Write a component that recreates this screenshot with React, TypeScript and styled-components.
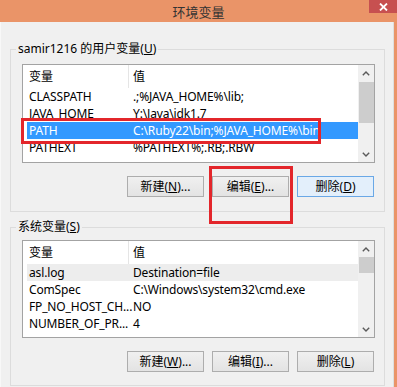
import React from 'react';
import styled, { createGlobalStyle } from 'styled-components';

const GlobalStyle = createGlobalStyle`
  html, body { margin: 0; padding: 0; background: #f0f0f0; }
  body {
    font-family: 'Noto Sans', 'Noto Sans CJK SC', sans-serif;
    font-size: 12px;
    color: #000;
  }
  * { box-sizing: border-box; }
`;

const Window = styled.div`
  position: relative;
  width: 397px;
  height: 387px;
  overflow: hidden;
  background: #ea9468;
  display: flex;
  flex-direction: column;
`;

const TitleBar = styled.div`
  position: relative;
  height: 22px;
  flex: none;
  display: flex;
  align-items: center;
  justify-content: center;
  font-family: 'Noto Sans CJK SC', sans-serif;
  font-size: 13px;
  color: #333;
`;

const CloseButton = styled.div`
  position: absolute;
  top: 0;
  right: 0;
  width: 28px;
  height: 13px;
  background: #c75050;
  display: flex;
  align-items: center;
  justify-content: center;
`;

const Client = styled.div`
  flex: 1;
  width: 394px;
  background: #f0f0f0;
  border-right: 1px solid #dedede;
  border-left: 1px solid #f8f8f8;
  padding: 27px 0 0 9px;
  display: flex;
  flex-direction: column;
`;

const GroupBox = styled.div<{ $h: number; $top: number; $padTop: number }>`
  position: relative;
  width: 375px;
  height: ${(p) => p.$h}px;
  margin-top: ${(p) => p.$top}px;
  border: 1px solid #dcdcdc;
  padding: ${(p) => p.$padTop}px 9px 0 11px;
  display: flex;
  flex-direction: column;
`;

const Legend = styled.span`
  position: absolute;
  top: -8px;
  left: 5px;
  padding: 0 2px;
  line-height: 14px;
  background: #f0f0f0;
  white-space: nowrap;
`;

const ListView = styled.div<{ $h: number }>`
  height: ${(p) => p.$h}px;
  flex: none;
  border: 1px solid #a3a3a3;
  background: #fff;
  display: flex;
`;

const ListBody = styled.div`
  flex: 1;
  overflow: hidden;
`;

const Header = styled.div`
  display: grid;
  grid-template-columns: 106px 1fr;
  height: 23px;
  line-height: 23px;
`;

const HeaderCell = styled.div<{ $first?: boolean }>`
  padding-left: ${(p) => (p.$first ? 6 : 4)}px;
  border-right: ${(p) => (p.$first ? '1px solid #e5e5e5' : 'none')};
  white-space: nowrap;
`;

const Row = styled.div<{ $state?: 'selected' | 'hover' }>`
  display: grid;
  grid-template-columns: 104px 1fr;
  height: 17px;
  line-height: 17px;
  margin-left: 4px;
  background: ${(p) =>
    p.$state === 'selected' ? '#3399ff' : p.$state === 'hover' ? '#ededed' : 'transparent'};
  color: ${(p) => (p.$state === 'selected' ? '#fff' : '#000')};
`;

const Cell = styled.div`
  padding-left: 2px;
  white-space: nowrap;
  letter-spacing: -0.15px;
`;

const ScrollBar = styled.div`
  width: 16px;
  flex: none;
  background: #f0f0f0;
  display: flex;
  flex-direction: column;
`;

const ArrowBox = styled.div`
  height: 16px;
  flex: none;
  display: flex;
  align-items: center;
  justify-content: center;
`;

const Thumb = styled.div<{ $gap: number; $h: number }>`
  margin-top: ${(p) => p.$gap}px;
  height: ${(p) => p.$h}px;
  margin-left: 1px;
  background: #cdcdcd;
  flex: none;
`;

const Track = styled.div`
  flex: 1;
`;

const ButtonRow = styled.div`
  display: flex;
  justify-content: flex-end;
  gap: 8px;
  margin-top: 13px;
  padding-right: 1px;
`;

const Button = styled.div<{ $default?: boolean }>`
  width: 77px;
  height: 21px;
  line-height: 19px;
  text-align: center;
  border: 1px solid ${(p) => (p.$default ? '#6aa8e6' : '#adadad')};
  background: ${(p) => (p.$default ? '#e3effb' : 'linear-gradient(#f0f0f0, #e3e3e3)')};
  white-space: nowrap;
`;

const Mark = styled.div<{ $x: number; $y: number; $w: number; $h: number }>`
  position: absolute;
  left: ${(p) => p.$x}px;
  top: ${(p) => p.$y}px;
  width: ${(p) => p.$w}px;
  height: ${(p) => p.$h}px;
  border: 3px solid #e3262b;
  pointer-events: none;
`;

const Chevron = ({ down }: { down?: boolean }) => (
  <svg width="8" height="5" viewBox="0 0 8 5">
    <path
      d={down ? 'M0.8 0.8 L4 4 L7.2 0.8' : 'M0.8 4.2 L4 1 L7.2 4.2'}
      fill="none"
      stroke="#5a5a5a"
      strokeWidth="1.4"
    />
  </svg>
);

type Item = { name: string; value: string; state?: 'selected' | 'hover' };

const VarList = ({
  items,
  height,
  thumbGap,
  thumbH,
}: {
  items: Item[];
  height: number;
  thumbGap: number;
  thumbH: number;
}) => (
  <ListView $h={height}>
    <ListBody>
      <Header>
        <HeaderCell $first>变量</HeaderCell>
        <HeaderCell>值</HeaderCell>
      </Header>
      {items.map((it) => (
        <Row key={it.name} $state={it.state}>
          <Cell>{it.name}</Cell>
          <Cell>{it.value}</Cell>
        </Row>
      ))}
    </ListBody>
    <ScrollBar>
      <ArrowBox>
        <Chevron />
      </ArrowBox>
      <Thumb $gap={thumbGap} $h={thumbH} />
      <Track />
      <ArrowBox>
        <Chevron down />
      </ArrowBox>
    </ScrollBar>
  </ListView>
);

const userVars: Item[] = [
  { name: 'CLASSPATH', value: '.;%JAVA_HOME%\\lib;' },
  { name: 'JAVA_HOME', value: 'Y:\\Java\\jdk1.7' },
  { name: 'PATH', value: 'C:\\Ruby22\\bin;%JAVA_HOME%\\bin', state: 'selected' },
  { name: 'PATHEXT', value: '%PATHEXT%;.RB;.RBW' },
];

const sysVars: Item[] = [
  { name: 'asl.log', value: 'Destination=file', state: 'hover' },
  { name: 'ComSpec', value: 'C:\\Windows\\system32\\cmd.exe' },
  { name: 'FP_NO_HOST_CH...', value: 'NO' },
  { name: 'NUMBER_OF_PR...', value: '4' },
];

const Btn = ({ label, hot, tail, primary }: { label: string; hot: string; tail: string; primary?: boolean }) => (
  <Button $default={primary}>
    {label}(<u>{hot}</u>){tail}
  </Button>
);

export default function App() {
  return (
    <>
      <GlobalStyle />
      <Window>
        <TitleBar>
          环境变量
          <CloseButton>
            <svg width="9" height="8" viewBox="0 0 9 8">
              <path d="M1 0.5 L8 7.5 M8 0.5 L1 7.5" stroke="#fff" strokeWidth="1.8" />
            </svg>
          </CloseButton>
        </TitleBar>
        <Client>
          <GroupBox $h={163} $top={0} $padTop={14}>
            <Legend>
              samir1216 的用户变量(<u>U</u>)
            </Legend>
            <VarList items={userVars} height={99} thumbGap={1} thumbH={41} />
            <ButtonRow>
              <Btn label="新建" hot="N" tail="..." />
              <Btn label="编辑" hot="E" tail="..." />
              <Btn label="删除" hot="D" tail="" primary />
            </ButtonRow>
          </GroupBox>
          <GroupBox $h={159} $top={15} $padTop={12}>
            <Legend>
              系统变量(<u>S</u>)
            </Legend>
            <VarList items={sysVars} height={98} thumbGap={0} thumbH={16} />
            <ButtonRow>
              <Btn label="新建" hot="W" tail="..." />
              <Btn label="编辑" hot="I" tail="..." />
              <Btn label="删除" hot="L" tail="" />
            </ButtonRow>
          </GroupBox>
        </Client>
        <Mark $x={21} $y={118} $w={300} $h={26} />
        <Mark $x={209} $y={166} $w={84} $h={58} />
      </Window>
    </>
  );
}
